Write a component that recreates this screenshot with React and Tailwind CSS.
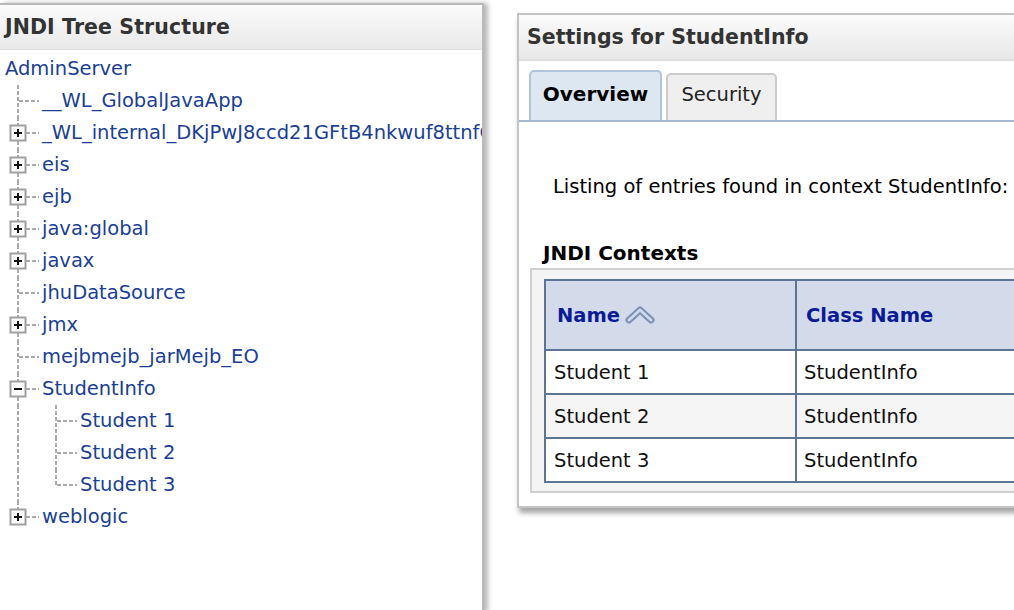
import React from 'react';

const font = { fontFamily: '"DejaVu Sans", Verdana, Tahoma, sans-serif' };

// one connector cell of the tree, 38x32
function Cell({ kind }) {
  const dash = '4 2';
  const c = '#ababab';
  const hasBox = kind.endsWith('Plus') || kind.endsWith('Minus');
  const base = kind.replace('Plus', '').replace('Minus', '');
  return (
    <svg width="38" height="32" className="shrink-0 block">
      {(base === 'line' || base === 'tee') && (
        <line x1="14" y1="0" x2="14" y2="32" stroke={c} strokeWidth="2" strokeDasharray={dash} />
      )}
      {base === 'elbow' && <line x1="14" y1="0" x2="14" y2="17" stroke={c} strokeWidth="2" strokeDasharray={dash} />}
      {(base === 'tee' || base === 'elbow') && (
        <line x1={hasBox ? 22 : 15} y1="16" x2="35" y2="16" stroke={c} strokeWidth="2" strokeDasharray={dash} />
      )}
      {hasBox && (
        <g>
          <rect x="6.5" y="8.5" width="15" height="15" fill="#fff" stroke="#a0a0a0" strokeWidth="2" />
          <line x1="10" y1="16" x2="18" y2="16" stroke="#111" strokeWidth="2" />
          {kind.endsWith('Plus') && <line x1="14" y1="12" x2="14" y2="20" stroke="#111" strokeWidth="2" />}
        </g>
      )}
    </svg>
  );
}

const tree = [
  { label: 'AdminServer', cells: [] },
  { label: '__WL_GlobalJavaApp', cells: ['tee'] },
  { label: '_WL_internal_DKjPwJ8ccd21GFtB4nkwuf8ttnfQ3x', cells: ['teePlus'] },
  { label: 'eis', cells: ['teePlus'] },
  { label: 'ejb', cells: ['teePlus'] },
  { label: 'java:global', cells: ['teePlus'] },
  { label: 'javax', cells: ['teePlus'] },
  { label: 'jhuDataSource', cells: ['tee'] },
  { label: 'jmx', cells: ['teePlus'] },
  { label: 'mejbmejb_jarMejb_EO', cells: ['tee'] },
  { label: 'StudentInfo', cells: ['teeMinus'] },
  { label: 'Student 1', cells: ['line', 'tee'] },
  { label: 'Student 2', cells: ['line', 'tee'] },
  { label: 'Student 3', cells: ['line', 'elbow'] },
  { label: 'weblogic', cells: ['elbowPlus'] },
];

function SortIcon() {
  return (
    <svg width="30" height="20" viewBox="0 0 30 20" className="inline-block ml-[5px] -mt-[4px] align-middle">
      <polyline points="4,16 15,6 26,16" fill="none" stroke="#7a91b3" strokeWidth="7" strokeLinejoin="round" strokeLinecap="round" />
      <polyline points="4,16 15,6 26,16" fill="none" stroke="#d0d9e7" strokeWidth="3" strokeLinejoin="round" strokeLinecap="round" />
    </svg>
  );
}

const rows = [
  ['Student 1', 'StudentInfo'],
  ['Student 2', 'StudentInfo'],
  ['Student 3', 'StudentInfo'],
];

export default function App() {
  return (
    <div className="w-[1014px] h-[610px] bg-white overflow-hidden flex items-start" style={font}>
      {/* left: JNDI tree */}
      <div className="w-[484px] h-[610px] shrink-0 mt-[3px] border-t-2 border-r-2 border-[#b9b9b9] shadow-[4px_0_5px_rgba(0,0,0,0.28)] bg-white overflow-hidden">
        <div className="h-[45px] flex items-center px-[5px] bg-gradient-to-b from-[#fbfbfb] to-[#e9e9e9] border-b border-[#dddddd]">
          <span className="text-[20.5px] font-bold text-[#333333] tracking-[0.1px]">JNDI Tree Structure</span>
        </div>
        <div className="pt-[3px] pl-[4px]">
          {tree.map((r, i) => (
            <div key={i} className="flex h-[32px] items-center whitespace-nowrap">
              {r.cells.map((k, j) => (
                <Cell key={j} kind={k} />
              ))}
              <span className={`text-[19.5px] leading-[32px] text-[#1a3f95] ${i === 0 ? 'pl-[1px]' : ''}`}>{r.label}</span>
            </div>
          ))}
        </div>
      </div>

      {/* right: settings panel */}
      <div className="ml-[33px] mt-[13px] flex-1 h-[495px] border-t-2 border-l-2 border-b-2 border-[#c4c4c4] shadow-[2px_5px_5px_rgba(0,0,0,0.35)] bg-white">
        <div className="h-[46px] flex items-center px-[8px] bg-gradient-to-b from-[#fbfbfb] to-[#e8e8e8] border-b-2 border-[#dedede]">
          <span className="text-[20.5px] font-bold text-[#333333] whitespace-nowrap">Settings for StudentInfo</span>
        </div>

        {/* tabs */}
        <div className="flex items-end gap-[4px] pl-[10px] mt-[9px] border-b-2 border-[#a5b8d2]">
          <div className="h-[50px] w-[133px] flex items-center justify-center pb-[4px] rounded-t-[5px] border-2 border-b-0 border-[#b0c4dc] bg-[#dde7f1] text-[20px] font-bold text-black">
            Overview
          </div>
          <div className="h-[47px] w-[111px] flex items-center justify-center pb-[5px] rounded-t-[5px] border-2 border-b-0 border-[#cccccc] bg-[#efefef] text-[19.5px] text-[#222222]">
            Security
          </div>
        </div>

        <div className="pl-[34px] pt-[50px] text-[19.5px] text-black whitespace-nowrap">Listing of entries found in context StudentInfo:</div>

        <div className="pl-[24px] pt-[37px] text-[20px] font-bold text-black whitespace-nowrap">JNDI Contexts</div>

        <div className="ml-[11px] mt-0 bg-[#f4f4f4] border-t-2 border-l-2 border-b-2 border-[#d0d0d0] pt-[9px] pb-[8px] pl-[12px]">
          <table className="border-collapse text-[19.5px] w-[700px]">
            <thead>
              <tr className="bg-[#d3dbeb] h-[70px]">
                <th className="w-[251px] border-2 border-[#5d7496] text-left pl-[11px] font-bold text-[#0b1b97]">
                  Name<SortIcon />
                </th>
                <th className="border-2 border-[#5d7496] text-left pl-[9px] font-bold text-[#0b1b97]">Class Name</th>
              </tr>
            </thead>
            <tbody>
              {rows.map((r, i) => (
                <tr key={i} className={`h-[44px] ${i === 1 ? 'bg-[#f5f5f5]' : 'bg-white'}`}>
                  <td className="border-2 border-[#5d7496] pl-[8px] text-[#111111]">{r[0]}</td>
                  <td className="border-2 border-[#5d7496] pl-[7px] text-[#111111]">{r[1]}</td>
                </tr>
              ))}
            </tbody>
          </table>
        </div>
      </div>
    </div>
  );
}
